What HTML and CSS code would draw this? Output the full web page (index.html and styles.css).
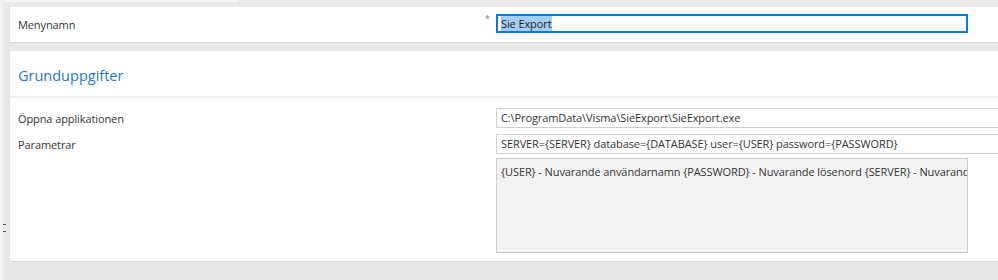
FILE: index.html
```html
<!DOCTYPE html>
<html lang="sv">
<head>
<meta charset="utf-8">
<title>Menynamn</title>
<link rel="stylesheet" href="styles.css">
</head>
<body>
<div class="topstrip"></div>
<div class="page">
  <section class="panel panel-name">
    <div class="row row-name">
      <label class="label">Menynamn</label>
      <span class="req">*</span>
      <div class="input input-focus"><span class="sel">Sie Export</span></div>
    </div>
  </section>
  <section class="panel panel-main">
    <h2 class="heading">Grunduppgifter</h2>
    <div class="fields">
      <div class="row">
        <label class="label">Öppna applikationen</label>
        <div class="input input-wide">C:\ProgramData\Visma\SieExport\SieExport.exe</div>
      </div>
      <div class="row">
        <label class="label">Parametrar</label>
        <div class="input input-wide">SERVER={SERVER} database={DATABASE} user={USER} password={PASSWORD}</div>
      </div>
      <div class="row">
        <span class="label"></span>
        <div class="note">{USER} - Nuvarande användarnamn {PASSWORD} - Nuvarande lösenord {SERVER} - Nuvarande server {DATABASE} - Nuvarande databas</div>
      </div>
    </div>
  </section>
</div>
<div class="grip"></div>
</body>
</html>
```
FILE: styles.css
```css
* { box-sizing: border-box; }
html, body {
  margin: 0;
  padding: 0;
  width: 998px;
  height: 280px;
  overflow: hidden;
}
body {
  background: #e9e9e9;
  font-family: "Open Sans", "Noto Sans", sans-serif;
  font-size: 11px;
  letter-spacing: -0.1px;
  color: #333333;
  position: relative;
  border-left: 3px solid #f2f2f2;
}
.topstrip {
  height: 2px;
  width: 235px;
  background: #f4f4f4;
}
.page {
  padding: 5px 0 0 6px;
  display: flex;
  flex-direction: column;
  gap: 8px;
}
.panel {
  background: #ffffff;
  border-left: 1px solid #dde3ea;
  border-bottom: 1px solid #d8d8d8;
  margin-right: -20px;
}
.panel-name {
  height: 36px;
  padding: 7px 0 0 8px;
}
.row {
  display: flex;
  align-items: flex-start;
}
.label {
  width: 478px;
  flex: none;
  line-height: 19px;
  padding-top: 1px;
}
.row-name .label { width: 467px; }
.req {
  width: 11px;
  flex: none;
  font-size: 9px;
  line-height: 9px;
  color: #777;
}
.input {
  height: 20px;
  border: 1px solid #cfcfcf;
  line-height: 18px;
  padding: 0 4px;
  white-space: nowrap;
  overflow: hidden;
}
.input-focus {
  width: 472px;
  height: 19px;
  border: 2px solid #0a7ad6;
  line-height: 15px;
  padding: 0 3px;
  color: #222;
}
.sel {
  background: #a4cdf0;
  display: inline-block;
  line-height: 15px;
  padding-right: 1px;
}
.input-wide {
  flex: 1;
}
.panel-main {
  height: 211px;
  display: flex;
  flex-direction: column;
}
.heading {
  margin: 0;
  height: 47px;
  padding: 15px 0 0 8px;
  font-size: 14.5px;
  font-weight: normal;
  letter-spacing: 0;
  color: #1f7bc4;
  border-bottom: 2px solid #ececec;
}
.fields {
  padding: 10px 0 0 8px;
  display: flex;
  flex-direction: column;
  gap: 6px;
}
.fields .row:nth-child(3) { margin-top: -2px; }
.note {
  width: 472px;
  height: 95px;
  background: #f3f3f3;
  border: 1px solid #cccccc;
  border-bottom-color: #c2c2c2;
  padding: 4px 4px;
  line-height: 18px;
  white-space: nowrap;
  overflow: hidden;
}
.grip {
  position: absolute;
  left: 0;
  top: 224px;
  width: 2px;
  height: 8px;
  border-top: 1px dotted #555;
  border-bottom: 1px dotted #555;
}
```
